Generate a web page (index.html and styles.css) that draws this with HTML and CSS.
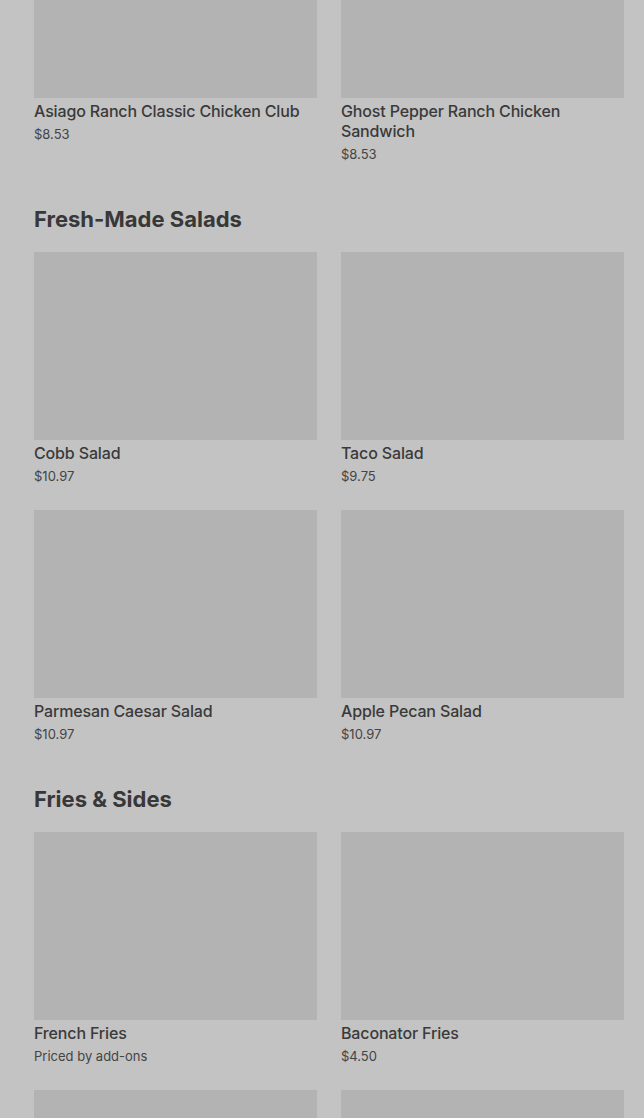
FILE: index.html
```html
<!DOCTYPE html>
<html lang="en">
<head>
    <meta charset="UTF-8">
    <meta name="viewport" content="width=device-width, initial-scale=1.0">
    <title>Menu</title>
    <link rel="stylesheet" href="styles.css">
</head>
<body>
    <div class="menu">
        <div class="section first">
            <div class="grid">
                <div class="card">
                    <div class="photo"></div>
                    <div class="name">Asiago Ranch Classic Chicken Club</div>
                    <div class="price">$8.53</div>
                </div>
                <div class="card">
                    <div class="photo"></div>
                    <div class="name">Ghost Pepper Ranch Chicken Sandwich</div>
                    <div class="price">$8.53</div>
                </div>
            </div>
        </div>

        <div class="section">
            <h2>Fresh-Made Salads</h2>
            <div class="grid">
                <div class="card">
                    <div class="photo"></div>
                    <div class="name">Cobb Salad</div>
                    <div class="price">$10.97</div>
                </div>
                <div class="card">
                    <div class="photo"></div>
                    <div class="name">Taco Salad</div>
                    <div class="price">$9.75</div>
                </div>
                <div class="card">
                    <div class="photo"></div>
                    <div class="name">Parmesan Caesar Salad</div>
                    <div class="price">$10.97</div>
                </div>
                <div class="card">
                    <div class="photo"></div>
                    <div class="name">Apple Pecan Salad</div>
                    <div class="price">$10.97</div>
                </div>
            </div>
        </div>

        <div class="section">
            <h2>Fries &amp; Sides</h2>
            <div class="grid">
                <div class="card">
                    <div class="photo"></div>
                    <div class="name">French Fries</div>
                    <div class="price">Priced by add-ons</div>
                </div>
                <div class="card">
                    <div class="photo"></div>
                    <div class="name">Baconator Fries</div>
                    <div class="price">$4.50</div>
                </div>
                <div class="card">
                    <div class="photo"></div>
                </div>
                <div class="card">
                    <div class="photo"></div>
                </div>
            </div>
        </div>
    </div>
</body>
</html>
```

FILE: styles.css
```css
html, body {
    margin: 0;
    padding: 0;
    background-color: #c3c3c3;
    height: 100%;
    overflow: hidden;
}
body {
    font-family: Inter, "Noto Sans", sans-serif;
    color: #3a3a3a;
}
.menu {
    margin-top: -90px;
    padding: 0 20px 0 34px;
}
.section {
    margin-top: 42px;
}
.section.first {
    margin-top: 0;
}
.section h2 {
    margin: 0 0 19px;
    font-size: 22px;
    line-height: 28px;
    font-weight: 700;
    letter-spacing: 0;
    color: #383838;
}
.grid {
    display: grid;
    grid-template-columns: 1fr 1fr;
    column-gap: 24px;
    row-gap: 25px;
}
.photo {
    height: 188px;
    background-color: #b3b3b3;
}
.name {
    margin-top: 3px;
    font-size: 16px;
    line-height: 20px;
    font-weight: 500;
    letter-spacing: -0.15px;
}
.price {
    margin-top: 4px;
    font-size: 13px;
    line-height: 18px;
    color: #444444;
}
```
